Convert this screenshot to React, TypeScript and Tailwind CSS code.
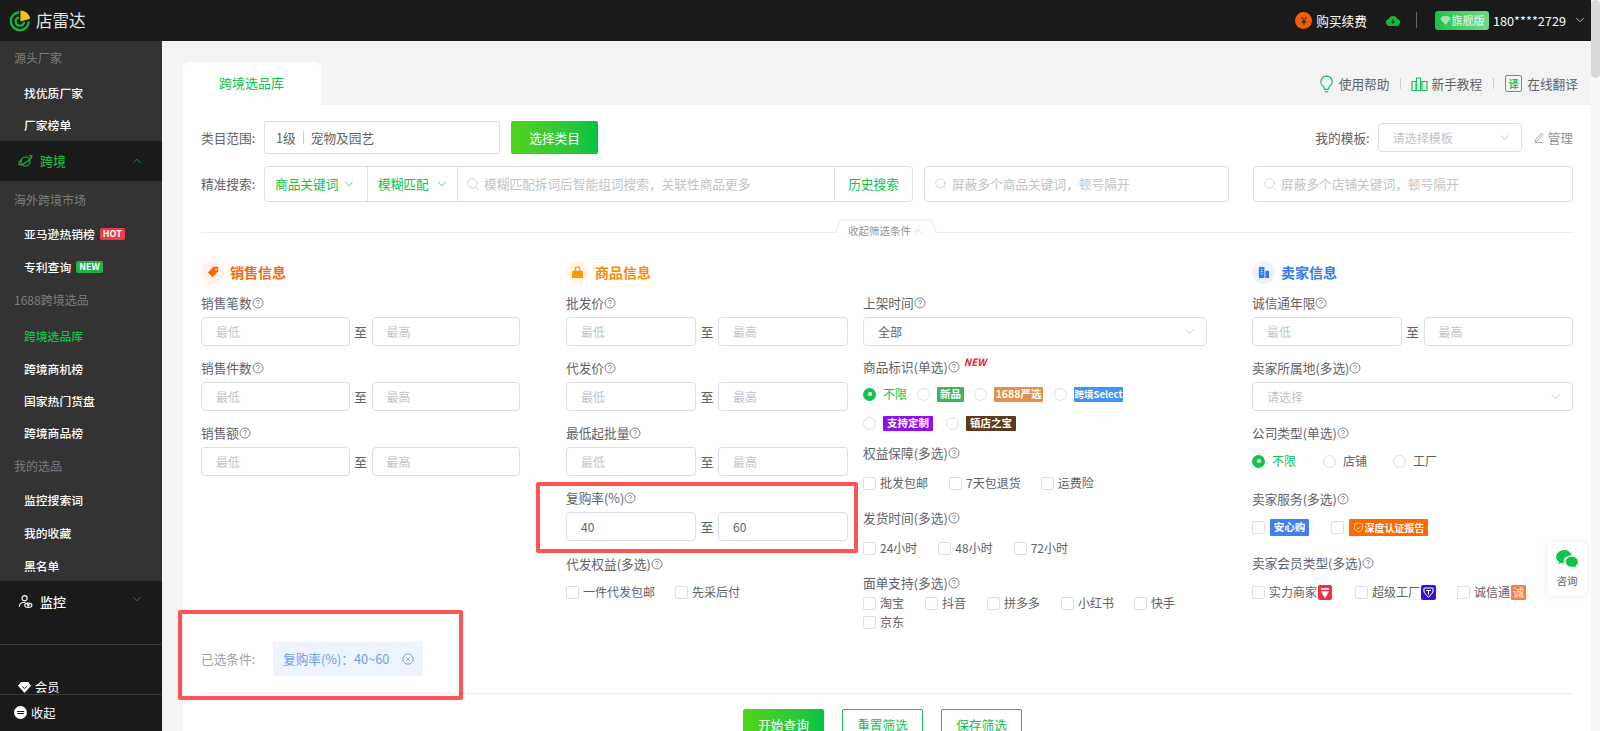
import { ChevronDown, ChevronUp, Search } from "lucide-react";
import type { ReactNode } from "react";

const FONT = "[font-family:'Noto_Sans_CJK_SC','Noto_Sans',sans-serif]";
const COMMA = "\uFF0C";
const COLON = "\uFF1A";

function Help() {
  return (
    <svg viewBox="0 0 12 12" className="h-[12px] w-[12px] shrink-0" fill="none" stroke="#666" strokeWidth="0.8">
      <circle cx="6" cy="6" r="5" />
      <path d="M4.5 4.8c0-.9.7-1.4 1.5-1.4s1.5.5 1.5 1.3c0 1.1-1.5 1.1-1.5 2.3" />
      <path d="M6 8.2v.9" />
    </svg>
  );
}

function Label({ text, className = "" }: { text: string; className?: string }) {
  return (
    <div className={`flex h-[28px] items-center text-[12.7px] text-[#606266] ${className}`}>
      {text}
      <Help />
    </div>
  );
}

function RangeInput({ w, min = "", max = "", gap }: { w: string; min?: string; max?: string; gap: string }) {
  return (
    <div className="flex items-center">
      <div className={`flex h-[29px] items-center rounded-[4px] border border-[#dcdfe6] pl-[14px] text-[12px] ${w} ${min ? "text-[#606266]" : "text-[#c0c4cc]"}`}>
        {min || "最低"}
      </div>
      <span className={`text-center text-[12.7px] text-[#606266] ${gap}`}>至</span>
      <div className={`flex h-[29px] items-center rounded-[4px] border border-[#dcdfe6] pl-[14px] text-[12px] ${w} ${max ? "text-[#606266]" : "text-[#c0c4cc]"}`}>
        {max || "最高"}
      </div>
    </div>
  );
}

function RangeField(props: { label: string; w: string; gap: string; min?: string; max?: string }) {
  return (
    <div className="h-[65px]">
      <Label text={props.label} />
      <RangeInput w={props.w} gap={props.gap} min={props.min} max={props.max} />
    </div>
  );
}

function SelectBox({ text, muted, className = "" }: { text: string; muted?: boolean; className?: string }) {
  return (
    <div className={`flex h-[29px] items-center justify-between rounded-[4px] border border-[#dcdfe6] pl-[14px] pr-[9px] text-[12px] ${muted ? "text-[#c0c4cc]" : "text-[#606266]"} ${className}`}>
      {text}
      <ChevronDown size={15} strokeWidth={1} className="text-[#a8abb2]" />
    </div>
  );
}

function Check({ children, className = "" }: { children?: ReactNode; className?: string }) {
  return (
    <div className={`flex h-[20px] items-center text-[12px] text-[#606266] ${className}`}>
      <span className="mr-[4px] h-[13px] w-[13px] shrink-0 rounded-[2px] border border-[#dcdfe6] bg-white" />
      {children}
    </div>
  );
}

function Radio({ on, children, className = "" }: { on?: boolean; children?: ReactNode; className?: string }) {
  return (
    <div className={`flex h-[20px] items-center text-[12px] ${on ? "text-[#0ec44a]" : "text-[#606266]"} ${className}`}>
      {on ? (
        <span className="mr-[7px] flex h-[13px] w-[13px] items-center justify-center rounded-full bg-[#0ec44a]">
          <span className="h-[4px] w-[4px] rounded-full bg-white" />
        </span>
      ) : (
        <span className="mr-[7px] h-[13px] w-[13px] rounded-full border border-[#dcdfe6]" />
      )}
      {children}
    </div>
  );
}

function Tag({ bg, w, children }: { bg: string; w: string; children: ReactNode }) {
  return (
    <span className={`inline-flex h-[15px] items-center justify-center whitespace-nowrap rounded-[1px] text-[10.5px] font-bold text-white ${bg} ${w}`}>
      {children}
    </span>
  );
}

function SectionHead({ title, color, circle, children }: { title: string; color: string; circle: string; children: ReactNode }) {
  return (
    <div className="flex h-[24px] items-center">
      <span className={`mr-[6px] flex h-[23px] w-[23px] items-center justify-center rounded-full ${circle}`}>{children}</span>
      <span className={`text-[14px] font-bold ${color}`}>{title}</span>
    </div>
  );
}

function SideGroup({ text }: { text: string }) {
  return <div className="flex h-[33px] items-center pl-[14px] text-[12px] text-[#7d7d7d]">{text}</div>;
}

function SideItem({ text, active, h = "h-[33px]", children }: { text: string; active?: boolean; h?: string; children?: ReactNode }) {
  return (
    <div className={`flex items-center pl-[24px] text-[11.8px] font-medium ${h} ${active ? "text-[#0ec44a]" : "text-white"}`}>
      {text}
      {children}
    </div>
  );
}

function Sidebar() {
  return (
    <aside className="flex w-[162px] shrink-0 flex-col overflow-hidden bg-[#1a1a1a] [&>*]:shrink-0">
      <div className="bg-[#333]">
        <SideGroup text="源头厂家" />
        <div className="pt-[3px]">
          <SideItem text="找优质厂家" h="h-[32px]" />
          <SideItem text="厂家榜单" h="h-[32px]" />
        </div>
      </div>
      <div className="flex h-[40px] items-center bg-[#1a1a1a] px-[18px] text-[13px] font-medium text-[#16b73c]">
        <svg viewBox="0 0 16 16" className="mr-[7px] h-[15px] w-[15px]" fill="none" stroke="#16b73c" strokeWidth="1.3">
          <circle cx="8" cy="8" r="4.8" />
          <path d="M4 5.5C1.5 7.5.3 10 1.2 11c1 1.1 4.3.1 7.3-2s5.7-5 6.3-6.2c.4-1-1-1.3-2.9-.8" />
        </svg>
        跨境
        <ChevronUp size={14} strokeWidth={1.2} className="ml-auto" />
      </div>
      <div className="bg-[#333]">
        <div className="pt-[2px]">
          <SideGroup text="海外跨境市场" />
        </div>
        <div className="pt-[1px]">
          <SideItem text="亚马逊热销榜">
            <span className="ml-[5px] rounded-[2px] bg-[#f03a47] px-[3px] text-[9px] font-bold leading-[12px] text-white">HOT</span>
          </SideItem>
          <SideItem text="专利查询" h="h-[33px]">
            <span className="ml-[5px] rounded-[2px] bg-[#28ad4a] px-[3px] text-[9px] font-bold leading-[12px] text-white">NEW</span>
          </SideItem>
        </div>
        <SideGroup text="1688跨境选品" />
        <div className="pt-[4px]">
          <SideItem text="跨境选品库" active h="h-[32.3px]" />
          <SideItem text="跨境商机榜" h="h-[32.3px]" />
          <SideItem text="国家热门货盘" h="h-[32.3px]" />
          <SideItem text="跨境商品榜" h="h-[32.3px]" />
        </div>
        <SideGroup text="我的选品" />
        <div className="-mb-[1.5px] pt-[1px]">
          <SideItem text="监控搜索词" />
          <SideItem text="我的收藏" />
          <SideItem text="黑名单" />
        </div>
      </div>
      <div className="flex h-[42px] items-center px-[18px] text-[13px] font-medium text-white">
        <svg viewBox="0 0 16 16" className="mr-[7px] h-[15px] w-[15px]" fill="none" stroke="#fff" strokeWidth="1.2">
          <circle cx="7" cy="4.5" r="2.8" />
          <path d="M1.5 13.5c0-2.5 1.5-4 3.5-4.5h3" />
          <ellipse cx="11" cy="12" rx="3.8" ry="2.3" />
          <circle cx="11" cy="12" r="0.8" fill="#fff" />
        </svg>
        监控
        <ChevronDown size={14} strokeWidth={1} className="ml-auto -translate-y-[3px] text-[#888]" />
      </div>
      <div className="mt-[21px] border-t border-[#3a3a3a]" />
      <div className="flex h-[49px] items-end pb-[1px] pl-[18px] text-[12.2px] leading-[12px] text-white">
        <svg viewBox="0 0 14 12" className="mr-[4px] h-[11px] w-[13px]" fill="#fff">
          <path d="M3 0h8l3 4-7 8-7-8z" />
          <path d="M4 4.5l3 2.5 3-2.5" stroke="#1a1a1a" strokeWidth="1" fill="none" />
        </svg>
        会员
      </div>
      <div className="border-t border-[#3a3a3a]">
        <div className="flex h-[36px] items-center pl-[14px] text-[12.2px] text-white">
          <span className="mr-[4px] flex h-[13px] w-[13px] items-center justify-center rounded-full bg-white">
            <span className="h-[3px] w-[7px] border-y border-[#1a1a1a]" />
          </span>
          收起
        </div>
      </div>
    </aside>
  );
}

function TopBar() {
  return (
    <header className="flex h-[41px] shrink-0 items-center bg-[#1a1a1a] pl-[9px] pr-[4px]">
      <svg viewBox="0 0 24 24" className="h-[22px] w-[22px]" fill="none">
        <path d="M11 2.4A9.8 9.8 0 1 0 21.6 12.5" stroke="#16b73c" strokeWidth="2.6" />
        <path d="M11 8A4.6 4.6 0 1 0 16.5 13" stroke="#16b73c" strokeWidth="2.4" />
        <path d="M12.5 .5C18 .8 22.5 4.5 23 9.5L12.5 12.5z" fill="#f6c21c" />
      </svg>
      <span className="ml-[5px] text-[16.5px] text-[#e6e6e6]">店雷达</span>
      <div className="ml-auto flex items-center">
        <span className="flex h-[17px] w-[17px] items-center justify-center rounded-full bg-[#f25c05] text-[11px] text-[#1a1a1a]">¥</span>
        <span className="ml-[4px] text-[12.7px] text-white">购买续费</span>
        <svg viewBox="0 0 16 14" className="ml-[18px] h-[13px] w-[16px]">
          <path d="M4 13a3.8 3.8 0 0 1-.6-7.5 4.8 4.8 0 0 1 9.2 0A3.8 3.8 0 0 1 12 13z" fill="#16b73c" />
          <path d="M8 5.5v4.5M6 8l2 2 2-2" stroke="#1a1a1a" strokeWidth="1" fill="none" />
        </svg>
        <span className="ml-[15px] h-[16px] w-px bg-[#666]" />
        <span className="ml-[18px] flex h-[19px] w-[54px] items-center justify-center rounded-[3px] bg-gradient-to-r from-[#0fc24a] to-[#6fd884] text-[11px] font-medium text-[#d8f7df]">
          <svg viewBox="0 0 14 12" className="mr-[1px] h-[9px] w-[11px]" fill="#9fe6b2">
            <path d="M3 0h8l3 4-7 8-7-8z" />
          </svg>
          旗舰版
        </span>
        <span className="ml-[4px] text-[12.7px] text-white">180****2729</span>
        <ChevronDown size={14} strokeWidth={1.2} className="ml-[7px] text-white" />
      </div>
    </header>
  );
}

function HelpLinks() {
  return (
    <div className="flex items-center pr-[13px] text-[12.7px] text-[#606266]">
      <svg viewBox="0 0 16 20" className="mr-[5px] h-[18px] w-[15px]" fill="none" stroke="#16c45c" strokeWidth="1.3">
        <path d="M8 1.2a6.3 6.3 0 0 0-3.2 11.7l1.2 3h4l1.2-3A6.3 6.3 0 0 0 8 1.2z" />
        <path d="M6 18.500h4" />
      </svg>
      使用帮助
      <span className="mx-[10px] h-[11px] w-px bg-[#ccc]" />
      <svg viewBox="0 0 17 15" className="mr-[4px] h-[16px] w-[17px]" fill="none" stroke="#16c45c" strokeWidth="1.2">
        <path d="M1 5h4v9H1zM5.500 1.500h4V14h-4zM11 5h5v9h-5z" />
      </svg>
      新手教程
      <span className="mx-[11px] h-[11px] w-px bg-[#ccc]" />
      <span className="mr-[5px] flex h-[17px] w-[17px] items-center justify-center rounded-[2px] border border-[#16c45c] text-[10px] font-bold text-[#16c45c]">译</span>
      在线翻译
    </div>
  );
}

function SearchBox({ text, className = "" }: { text: string; className?: string }) {
  return (
    <div className={`flex h-[36px] items-center rounded-[4px] border border-[#dcdfe6] pl-[9px] text-[12.7px] text-[#c0c4cc] ${className}`}>
      <Search size={14} strokeWidth={1.2} className="mr-[4px]" />
      {text}
    </div>
  );
}

function FilterTop() {
  return (
    <>
      <div className="flex h-[33px] items-center text-[12.7px] text-[#606266]">
        <span className="w-[63px]">类目范围:</span>
        <div className="flex h-full w-[236px] items-center rounded-[2px] border border-[#dcdfe6] pl-[11px]">
          1级
          <span className="mx-[7px] h-[13px] w-px bg-[#ccc]" />
          宠物及园艺
        </div>
        <button className="ml-[11px] h-full w-[87px] rounded-[2px] bg-gradient-to-r from-[#4fd316] to-[#00c244] text-white">
          选择类目
        </button>
        <span className="ml-auto mr-[8px]">我的模板:</span>
        <SelectBox text="请选择模板" muted className="w-[144px]" />
        <svg viewBox="0 0 14 14" className="ml-[11px] h-[13px] w-[12px]" fill="none" stroke="#999" strokeWidth="1">
          <path d="M3 9.5 9.5 2l2 1.5L5 11l-2.5.5zM2 13h10" />
        </svg>
        <span className="ml-[3px] text-[#909399]">管理</span>
      </div>
      <div className="mt-[12px] flex items-center text-[12.7px] text-[#606266]">
        <span className="w-[63px]">精准搜索:</span>
        <div className="flex h-[36px] w-[649px] items-center rounded-[4px] border border-[#dcdfe6]">
          <span className="flex h-full w-[103px] items-center border-r border-[#dcdfe6] pl-[10px] text-[#0ec44a]">
            商品关键词
            <ChevronDown size={14} strokeWidth={1.2} className="ml-[4px]" />
          </span>
          <span className="flex h-full w-[90px] items-center border-r border-[#dcdfe6] pl-[10px] text-[#0ec44a]">
            模糊匹配
            <ChevronDown size={14} strokeWidth={1.2} className="ml-[6px]" />
          </span>
          <span className="flex flex-1 items-center pl-[8px] text-[#c0c4cc]">
            <Search size={14} strokeWidth={1.2} className="mr-[4px]" />
            {`模糊匹配拆词后智能组词搜索${COMMA}关联性商品更多`}
          </span>
          <span className="flex h-full w-[78px] items-center justify-center border-l border-[#dcdfe6] text-[#0ec44a]">历史搜索</span>
        </div>
        <SearchBox text={`屏蔽多个商品关键词${COMMA}顿号隔开`} className="ml-[11px] w-[305px]" />
        <SearchBox text={`屏蔽多个店铺关键词${COMMA}顿号隔开`} className="ml-[24px] w-[320px]" />
      </div>
      <div className="relative mt-[30px] border-t border-[#ebeef5]">
        <svg viewBox="0 0 106 14" className="absolute left-[632px] top-[-14px] h-[14px] w-[106px]" fill="#fff" stroke="#e6e8ee">
          <path d="M0 13.5C3 13.5 4 12 4.5 9 5.5 3 7 1 10 1H96C99 1 100.5 3 101.5 9 102 12 103 13.5 106 13.5" />
        </svg>
        <div className="absolute left-[640px] top-[-10px] flex h-[16px] w-[90px] items-center justify-center bg-white text-[10.5px] text-[#909399]">
          收起筛选条件
          <ChevronUp size={12} strokeWidth={1} className="ml-[1px]" />
        </div>
      </div>
    </>
  );
}

function Columns() {
  return (
    <div className="mt-[27px] flex">
      <div className="w-[365px]">
        <SectionHead title="销售信息" color="text-[#f5670f]" circle="bg-[#fff3ec]">
          <svg viewBox="0 0 14 14" className="h-[12px] w-[12px]" fill="#f5670f">
            <path d="M7.5 1H13v5.5L6.5 13 1 7.5zM10.5 3a1 1 0 1 0 0 2 1 1 0 0 0 0-2z" fillRule="evenodd" />
          </svg>
        </SectionHead>
        <div className="mt-[5px]">
          <RangeField label="销售笔数" w="w-[148.5px]" gap="w-[22px]" />
          <RangeField label="销售件数" w="w-[148.5px]" gap="w-[22px]" />
          <RangeField label="销售额" w="w-[148.5px]" gap="w-[22px]" />
        </div>
      </div>
      <div className="w-[297px]">
        <SectionHead title="商品信息" color="text-[#ff8a00]" circle="bg-[#fff6e8]">
          <svg viewBox="0 0 14 14" className="h-[13px] w-[13px]" fill="#ff9500">
            <path d="M1.5 5h11l.8 8H.7z" />
            <path d="M4.5 6V3.5a2.5 2.5 0 0 1 5 0V6" fill="none" stroke="#ff9500" strokeWidth="1.2" />
          </svg>
        </SectionHead>
        <div className="mt-[5px]">
          <RangeField label="批发价" w="w-[130px]" gap="w-[22px]" />
          <RangeField label="代发价" w="w-[130px]" gap="w-[22px]" />
          <RangeField label="最低起批量" w="w-[130px]" gap="w-[22px]" />
          <RangeField label="复购率(%)" w="w-[130px]" gap="w-[22px]" min="40" max="60" />
        </div>
        <Label text="代发权益(多选)" className="mt-[1px]" />
        <div className="mt-[4px] flex">
          <Check>一件代发包邮</Check>
          <Check className="ml-[20px]">先采后付</Check>
        </div>
      </div>
      <div className="w-[389px]">
        <div className="h-[24px]" />
        <div className="mt-[5px]">
          <Label text="上架时间" />
          <SelectBox text="全部" className="w-[344px]" />
        </div>
        <div className="relative mt-[7px] w-fit">
          <Label text="商品标识(单选)" />
          <span className="absolute left-[calc(100%+4px)] top-[3px] whitespace-nowrap text-[10px] font-bold italic leading-[12px] text-[#f5222d]">NEW</span>
        </div>
        <div className="mt-[3px] flex items-center">
          <Radio on>不限</Radio>
          <Radio className="ml-[10px]"><Tag bg="bg-[#37b85c]" w="w-[27px]">新品</Tag></Radio>
          <Radio className="ml-[10px]"><Tag bg="bg-[#e2914a]" w="w-[49px]">1688严选</Tag></Radio>
          <Radio className="ml-[11px]"><Tag bg="bg-[#3e95f5]" w="w-[49px]"><span className="text-[9.5px]">跨境Select</span></Tag></Radio>
        </div>
        <div className="mt-[9px] flex items-center">
          <Radio><Tag bg="bg-[#8f0fee]" w="w-[50px]">支持定制</Tag></Radio>
          <Radio className="ml-[13px]"><Tag bg="bg-[#5c3a1e]" w="w-[50px]">镇店之宝</Tag></Radio>
        </div>
        <Label text="权益保障(多选)" className="mt-[6px]" />
        <div className="mt-[6px] flex">
          <Check>批发包邮</Check>
          <Check className="ml-[21px]">7天包退货</Check>
          <Check className="ml-[20px]">运费险</Check>
        </div>
        <Label text="发货时间(多选)" className="mt-[11px]" />
        <div className="mt-[6px] flex">
          <Check>24小时</Check>
          <Check className="ml-[21px]">48小时</Check>
          <Check className="ml-[21px]">72小时</Check>
        </div>
        <Label text="面单支持(多选)" className="mt-[11px]" />
        <div className="-mt-[4px] flex w-[344px] flex-wrap">
          <Check className="mr-[21px]">淘宝</Check>
          <Check className="mr-[21px]">抖音</Check>
          <Check className="mr-[21px]">拼多多</Check>
          <Check className="mr-[20px]">小红书</Check>
          <Check>快手</Check>
          <Check className="-mt-[1px] basis-full">京东</Check>
        </div>
      </div>
      <div className="w-[321px]">
        <SectionHead title="卖家信息" color="text-[#2f7bf0]" circle="bg-[#eef4ff]">
          <svg viewBox="0 0 14 14" className="h-[13px] w-[13px]" fill="#2f7bf0">
            <path d="M2 1h6v12H2zM9 5h4v8H9z" />
            <path d="M4 3.5h2M4 6h2M4 8.5h2" stroke="#eef4ff" strokeWidth="0.9" />
          </svg>
        </SectionHead>
        <div className="mt-[5px]">
          <RangeField label="诚信通年限" w="w-[149.5px]" gap="w-[22px]" />
          <div className="h-[65px]">
            <Label text="卖家所属地(多选)" />
            <SelectBox text="请选择" muted />
          </div>
          <Label text="公司类型(单选)" />
          <div className="mt-[4px] flex">
            <Radio on>不限</Radio>
            <Radio className="ml-[27px]">店铺</Radio>
            <Radio className="ml-[26px]">工厂</Radio>
          </div>
          <Label text="卖家服务(多选)" className="mt-[14px]" />
          <div className="mt-[4px] flex">
            <Check><Tag bg="bg-[#3f7ff5] h-[17px] ml-[1px]" w="w-[39px]">安心购</Tag></Check>
            <Check className="ml-[22px]">
              <Tag bg="bg-[#ff6a00] h-[17px] ml-[1px]" w="w-[79px]">
                <svg viewBox="0 0 12 12" className="mr-[1px] h-[11px] w-[11px]" fill="none" stroke="#ffd3ad" strokeWidth="1">
                  <path d="M6 1l4.5 1.5V6c0 2.5-2 4-4.5 5-2.5-1-4.5-2.500-4.5-5V2.5zM4 6l1.500 1.500L8 5" />
                </svg>
                <span className="text-[10px]">深度认证报告</span>
              </Tag>
            </Check>
          </div>
          <Label text="卖家会员类型(多选)" className="mt-[12px]" />
          <div className="mt-[5px] flex">
            <Check>
              实力商家
              <svg viewBox="0 0 14 15" className="ml-[1px] h-[15px] w-[14px]">
                <rect width="14" height="15" rx="2" fill="#f0323c" />
                <path d="M3 4h8M4 7h6l-3 5z" stroke="#fff" strokeWidth="1.4" fill="#fff" />
              </svg>
            </Check>
            <Check className="ml-[23px]">
              超级工厂
              <svg viewBox="0 0 15 15" className="ml-[1px] h-[15px] w-[15px]">
                <rect width="15" height="15" rx="2" fill="#3a10d8" />
                <path d="M3 3h9v4l-4.5 5.5L3 7z" stroke="#fff" strokeWidth="1" fill="none" />
                <path d="M5 5.5h5M7.5 5.5v4" stroke="#fff" strokeWidth="1" />
              </svg>
            </Check>
            <Check className="ml-[21px]">
              诚信通
              <span className="ml-[1px] flex h-[15px] w-[15px] items-center justify-center rounded-[1px] bg-[#ff7e3c] text-[11px] text-white">诚</span>
            </Check>
          </div>
        </div>
      </div>
    </div>
  );
}

export default function App() {
  return (
    <div className={`flex h-[731px] w-full overflow-hidden bg-[#f8f8f8] ${FONT}`}>
      <div className="flex w-[1591px] shrink-0 flex-col">
        <TopBar />
        <div className="flex min-h-0 flex-1">
          <Sidebar />
          <main className="relative flex-1 overflow-hidden bg-[#f4f4f4] pl-[21px] pt-[21px]">
            <div className="flex h-[43px] items-stretch justify-between">
              <div className="flex w-[138px] items-center justify-center rounded-t-[6px] bg-white pb-[1px] pr-[1px] text-[13px] text-[#0ec44a]">跨境选品库</div>
              <HelpLinks />
            </div>
            <div className="h-full bg-white px-[18px] pt-[16px]">
              <FilterTop />
              <Columns />
              <div className="mt-[10px] flex h-[34px] items-center text-[12.7px] text-[#a0a3a8]">
                <span className="w-[72px]">已选条件:</span>
                <div className="flex h-full w-[150px] items-center justify-between rounded-[2px] bg-[#edf4fe] pl-[10px] pr-[9px] text-[12.7px] text-[#6a9ff0]">
                  <span className="whitespace-nowrap">{`复购率(%)${COLON}40~60`}</span>
                  <svg viewBox="0 0 12 12" className="h-[12px] w-[12px]" fill="none" stroke="#6a9ff0" strokeWidth="0.9">
                    <circle cx="6" cy="6" r="5.2" />
                    <path d="M4.2 4.2l3.6 3.6M7.8 4.2l-3.6 3.6" />
                  </svg>
                </div>
              </div>
              <div className="mt-[17px] border-t border-[#ebeef5]" />
              <div className="mt-[15px] flex justify-center gap-[18px] pr-[9px] text-[12.7px]">
                <button className="h-[32px] w-[81px] rounded-[2px] bg-gradient-to-r from-[#4fd316] to-[#00c244] text-white">开始查询</button>
                <button className="h-[32px] w-[81px] rounded-[2px] border border-[#0ec44a] text-[#0ec44a]">重置筛选</button>
                <button className="h-[32px] w-[81px] rounded-[2px] border border-[#0ec44a] text-[#0ec44a]">保存筛选</button>
              </div>
            </div>
            {/* annotation boxes drawn over the screenshot */}
            <div className="absolute left-[374px] top-[441px] h-[71px] w-[322px] rounded-[2px] border-4 border-[#ff5454]" />
            <div className="absolute left-[16px] top-[569px] h-[90px] w-[285px] rounded-[2px] border-4 border-[#ff5454]" />
            <div className="absolute left-[1385px] top-[501px] flex h-[54px] w-[40px] flex-col items-center justify-center rounded-[6px] bg-white text-[10.5px] text-[#606266] shadow-[0_0_6px_rgba(0,0,0,0.08)]">
              <svg viewBox="0 0 24 20" className="mb-[4px] h-[19px] w-[23px]" fill="#0ec44a">
                <path d="M9 0C4 0 0 3.2 0 7.2c0 2.3 1.3 4.3 3.3 5.6L2.5 15l2.8-1.4c1 .3 2 .4 3 .4-.2-.6-.3-1.2-.3-1.8C8 8.5 11.5 5.5 16.5 5.8 15.5 2.5 12.6 0 9 0z" />
                <path d="M16.5 7C12.9 7 10 9.4 10 12.3s2.9 5.3 6.5 5.3c.8 0 1.5-.1 2.2-.3l2.3 1.2-.6-1.9c1.6-1 2.6-2.6 2.6-4.300C23 9.400 20.100 7 16.500 7z" />
              </svg>
              咨询
            </div>
          </main>
        </div>
      </div>
      <div className="w-[9px] shrink-0">
        <div className="h-[78px] rounded-[5px] bg-[#d9d9d9]" />
      </div>
    </div>
  );
}
